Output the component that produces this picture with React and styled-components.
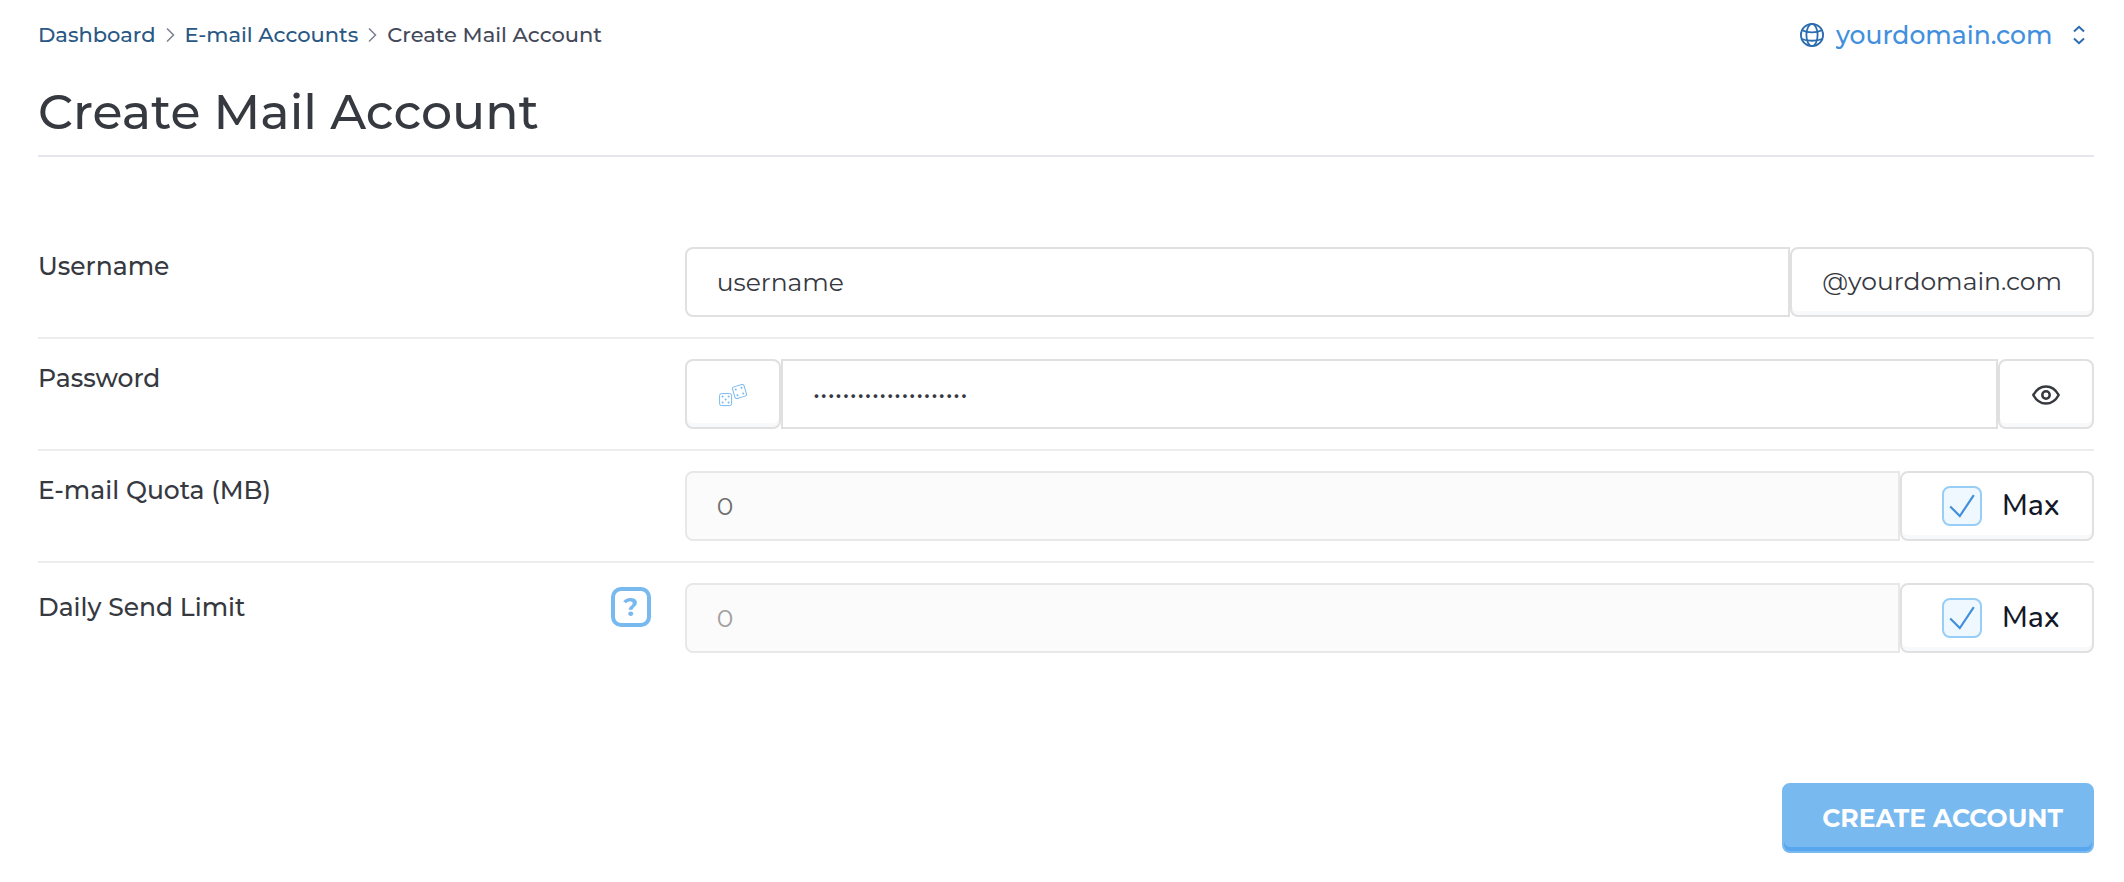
import React, { useState } from "react";
import styled, { createGlobalStyle, css } from "styled-components";

const GlobalStyle = createGlobalStyle`
  *, *::before, *::after { box-sizing: border-box; }
  body {
    margin: 0;
    background: #fff;
    color: #36393f;
    font-family: Montserrat, Inter, "Liberation Sans", sans-serif;
    font-size: 25px;
    line-height: 30px;
  }
  button, input, select { font: inherit; color: inherit; margin: 0; }
`;

const Page = styled.main`
  padding: 20px 30px 28px 38px;
`;

const TopBar = styled.header`
  display: flex;
  justify-content: space-between;
  align-items: center;
  height: 30px;
`;

const Breadcrumbs = styled.nav`
  display: flex;
  align-items: center;
  gap: 10px;
  font-size: 21px;
  font-weight: 500;
  color: #44495a;
`;

const Crumb = styled.a`
  color: #2a5885;
  text-decoration: none;
`;

const DomainPicker = styled.label`
  display: flex;
  align-items: center;
  margin-right: 9px;
  color: #2b6cb0;
`;

const DomainSelect = styled.select`
  appearance: none;
  margin: 0 20px 0 12px;
  padding: 0;
  border: 0;
  background: none;
  color: #4290dd;
  font-weight: 500;
  cursor: pointer;
`;

const Title = styled.h1`
  margin: 32px 0 0;
  padding-bottom: 13px;
  border-bottom: 2px solid #e5e6eb;
  font-size: 49px;
  line-height: 60px;
  font-weight: 500;
`;

const Form = styled.form`
  margin-top: 70px;
`;

const Row = styled.div`
  display: grid;
  grid-template-columns: 10fr 23fr;
  column-gap: 34px;
  padding: 20px 0;
  & + & { border-top: 2px solid #ededed; }
`;

const LabelCell = styled.div`
  display: flex;
  align-items: center;
  align-self: start;
  justify-content: space-between;
  padding-top: 4px;
  font-weight: 500;
`;

const HelpButton = styled.button`
  width: 40px;
  height: 40px;
  padding: 0;
  border: 4px solid #78b9f0;
  border-radius: 10px;
  background: #fff;
  color: #78b9f0;
  font-weight: 700;
  cursor: pointer;
`;

const Group = styled.div`
  display: flex;
  height: 70px;
`;

const Input = styled.input`
  flex: 1;
  min-width: 0;
  padding: 0 30px;
  border: 2px solid #e0e0e0;
  border-radius: ${(p) => (p.$first ? "8px 0 0 8px" : "0")};
  background: #fff;
  outline: 0;
  &:disabled {
    border-color: #e8e8e8;
    background: #fbfbfb;
    color: ${(p) => (p.$faint ? "#a0a0a0" : "#707070")};
    opacity: 1;
  }
`;

const addon = css`
  display: flex;
  align-items: center;
  justify-content: center;
  flex: none;
  border: 2px solid #e0e0e0;
  border-radius: 8px;
  background: #fff;
  box-shadow: inset 0 -4px 0 #f8f9fb;
`;

const Suffix = styled.span`
  ${addon}
  padding: 0 30px 2px;
`;

const IconButton = styled.button`
  ${addon}
  width: 96px;
  padding: 2px 0 0;
  cursor: pointer;
`;

const MaxToggle = styled.label`
  ${addon}
  justify-content: flex-start;
  gap: 20px;
  width: 194px;
  padding-left: 40px;
  color: #111827;
  font-family: Nunito, Lato, sans-serif;
  font-size: 30px;
  line-height: 32px;
  font-weight: 500;
  cursor: pointer;
`;

const TickBox = styled.span`
  display: grid;
  width: 40px;
  height: 40px;
  & > * { grid-area: 1 / 1; }
  svg { pointer-events: none; }
`;

const Tick = styled.input`
  appearance: none;
  width: 40px;
  height: 40px;
  border: 2px solid #98cdf5;
  border-radius: 8px;
  background: #fff;
  cursor: pointer;
  &:checked { background: #f0f8ff; }
  &:not(:checked) + svg { visibility: hidden; }
`;

const Actions = styled.div`
  display: flex;
  justify-content: flex-end;
  margin-top: 110px;
`;

const SubmitButton = styled.button`
  height: 70px;
  padding: 0 29px 0 38px;
  border: 2px solid #78b9f0;
  border-radius: 8px;
  background: #78b9f0;
  box-shadow: inset 0 -4px 0 #58a7ee;
  color: #fff;
  font-weight: 700;
  text-transform: uppercase;
  cursor: pointer;
`;

const Separator = () => (
  <svg width="9" height="16" viewBox="0 0 9 16" fill="none" stroke="#7b8190" strokeWidth="1.5" aria-hidden="true">
    <path d="M1 1.5 7.5 8 1 14.5" />
  </svg>
);

const Globe = () => (
  <svg width="24" height="26" viewBox="0 0 24 26" fill="none" stroke="currentColor" strokeWidth="1.8" aria-hidden="true">
    <circle cx="12" cy="13" r="11.1" />
    <ellipse cx="12" cy="13" rx="5.6" ry="11.1" />
    <path d="M2.2 8.2C7.5 11.2 16.5 11.2 21.8 8.2M1.2 16.7c6 2.7 15.6 2.7 21.6 0" />
  </svg>
);

const UpDown = () => (
  <svg width="12" height="20" viewBox="0 0 12 20" fill="none" stroke="currentColor" strokeWidth="2" aria-hidden="true">
    <path d="M1 6.5 6 1.8l5 4.7M1 13.5l5 4.7 5-4.7" />
  </svg>
);

const Dice = () => (
  <svg width="28" height="24" viewBox="0 0 28 24" fill="none" stroke="#78b9f0" aria-hidden="true">
    <rect x="0.6" y="10.6" width="12" height="12" rx="1.8" />
    <g fill="#78b9f0" stroke="none">
      <circle cx="3.6" cy="13.6" r="1" />
      <circle cx="9.6" cy="13.6" r="1" />
      <circle cx="6.6" cy="16.6" r="1" />
      <circle cx="3.6" cy="19.6" r="1" />
      <circle cx="9.6" cy="19.6" r="1" />
    </g>
    <g transform="rotate(-16 20.5 8.5)">
      <rect x="14.5" y="2.5" width="12" height="12" rx="1.8" />
      <g fill="#78b9f0" stroke="none">
        <circle cx="17.5" cy="5.5" r="1" />
        <circle cx="23.5" cy="5.5" r="1" />
        <circle cx="17.5" cy="11.5" r="1" />
        <circle cx="23.5" cy="11.5" r="1" />
      </g>
    </g>
  </svg>
);

const Eye = () => (
  <svg width="28" height="20" viewBox="0 0 28 20" fill="none" stroke="#36393f" strokeWidth="2.5" strokeLinejoin="round" aria-hidden="true">
    <path d="M1.3 10C7.5-1.4 20.5-1.4 26.7 10 20.5 21.4 7.5 21.4 1.3 10Z" />
    <circle cx="14" cy="10" r="3.7" />
  </svg>
);

const TickMark = () => (
  <svg width="40" height="40" viewBox="0 0 40 40" fill="none" stroke="#4290dd" strokeWidth="2.2" aria-hidden="true">
    <path d="M8.2 20.5 17.8 30 31.8 9.2" />
  </svg>
);

function LimitField({ id, faint }) {
  const [max, setMax] = useState(true);
  const [value, setValue] = useState("0");
  return (
    <Group>
      <Input id={id} $first $faint={faint} value={value} disabled={max} onChange={(e) => setValue(e.target.value)} />
      <MaxToggle>
        <TickBox>
          <Tick type="checkbox" checked={max} onChange={(e) => setMax(e.target.checked)} />
          <TickMark />
        </TickBox>
        Max
      </MaxToggle>
    </Group>
  );
}

export default function App() {
  const [username, setUsername] = useState("username");
  const [password, setPassword] = useState("q7Vd2mXw9Lr4Tz8Kp3NbY");
  const [visible, setVisible] = useState(false);

  return (
    <>
      <GlobalStyle />
      <Page>
        <TopBar>
          <Breadcrumbs aria-label="Breadcrumb">
            <Crumb href="#dashboard">Dashboard</Crumb>
            <Separator />
            <Crumb href="#accounts">E-mail Accounts</Crumb>
            <Separator />
            <span aria-current="page">Create Mail Account</span>
          </Breadcrumbs>
          <DomainPicker>
            <Globe />
            <DomainSelect aria-label="Domain">
              <option>yourdomain.com</option>
            </DomainSelect>
            <UpDown />
          </DomainPicker>
        </TopBar>
        <Title>Create Mail Account</Title>
        <Form onSubmit={(e) => e.preventDefault()}>
          <Row>
            <LabelCell>
              <label htmlFor="username">Username</label>
            </LabelCell>
            <Group>
              <Input id="username" $first value={username} onChange={(e) => setUsername(e.target.value)} />
              <Suffix>@yourdomain.com</Suffix>
            </Group>
          </Row>
          <Row>
            <LabelCell>
              <label htmlFor="password">Password</label>
            </LabelCell>
            <Group>
              <IconButton type="button" aria-label="Generate password">
                <Dice />
              </IconButton>
              <Input
                id="password"
                type={visible ? "text" : "password"}
                value={password}
                onChange={(e) => setPassword(e.target.value)}
              />
              <IconButton type="button" aria-label="Show password" onClick={() => setVisible(!visible)}>
                <Eye />
              </IconButton>
            </Group>
          </Row>
          <Row>
            <LabelCell>
              <label htmlFor="quota">E-mail Quota (MB)</label>
            </LabelCell>
            <LimitField id="quota" />
          </Row>
          <Row>
            <LabelCell>
              <label htmlFor="limit">Daily Send Limit</label>
              <HelpButton type="button" aria-label="About the daily send limit">?</HelpButton>
            </LabelCell>
            <LimitField id="limit" faint />
          </Row>
          <Actions>
            <SubmitButton type="submit">Create Account</SubmitButton>
          </Actions>
        </Form>
      </Page>
    </>
  );
}
